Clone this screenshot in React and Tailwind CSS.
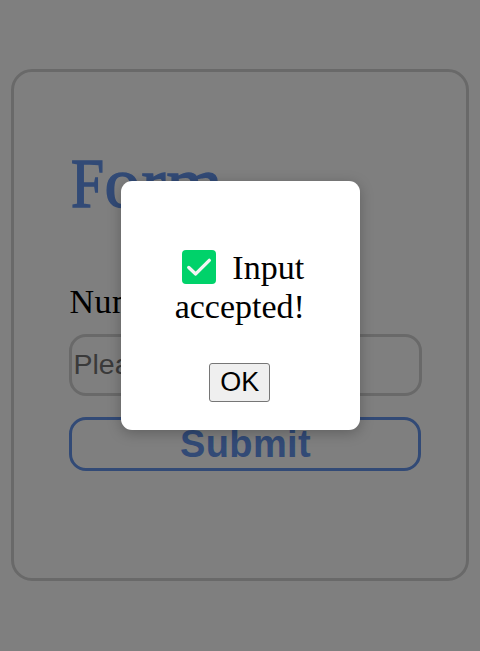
export default function App() {
  return (
    <div className="relative h-[651px] w-[480px] overflow-hidden bg-white">
      <main className="px-[11px] pt-[69px]">
        <form className="flex h-[512px] w-[458px] flex-col rounded-[21px] border-[3px] border-[#d3d3d3] px-[54.5px] pt-[71px]">
          <h1 className="h-[80px] pl-[2px] font-['Liberation_Serif',serif] text-[72px] leading-[80px] text-[#6495ed] [-webkit-text-stroke:1.5px_#6495ed]">
            <span className="inline-block w-[34px] origin-left scale-x-[0.86] text-[69px]">F</span>
            <span className="tracking-[1px]">orm</span>
          </h1>
          <label className="mt-[59px] h-[40px] pl-[1px] font-['Liberation_Serif',serif] text-[34px] leading-[40px] tracking-[0.5px] text-black">
            Number
          </label>
          <input
            className="mt-[12px] h-[62px] w-[353px] shrink-0 rounded-[17px] border-[3px] border-[#d3d3d3] bg-white px-[2px] pb-px font-['Liberation_Sans',sans-serif] text-[28.5px] text-black placeholder:text-[#757575]"
            placeholder="Please enter"
          />
          <button
            type="button"
            className="mt-[20.5px] flex h-[54px] w-[352px] shrink-0 items-center justify-center rounded-[17px] border-[3px] border-[#6495ed] bg-white pl-[2px] pt-px font-['Liberation_Sans',sans-serif] text-[38px] font-bold tracking-[0.4px] text-[#6495ed]"
          >
            Submit
          </button>
        </form>
      </main>
      <div className="absolute inset-0 bg-black/50">
        <div
          role="dialog"
          className="ml-[120.5px] mt-[180.5px] flex h-[249px] w-[239.5px] flex-col items-center rounded-[11px] bg-white pt-[67.5px] shadow-[0_3px_14px_rgba(0,0,0,0.25)]"
        >
          <p className="text-center font-['Liberation_Serif',serif] text-[34px] leading-[39px] text-black">
            <span className="flex items-center justify-center pl-[6px]">
              <svg width="34" height="34" viewBox="0 0 34 34" className="relative -top-px mr-[16px]">
                <rect width="34" height="34" rx="4" fill="#00d26a" />
                <path d="M6.8 17.5l6.9 6.4L27.3 10.4" fill="none" stroke="#f4f4f4" strokeWidth="3.4" strokeLinecap="round" strokeLinejoin="round" />
              </svg>
              Input
            </span>
            <span className="block -translate-x-[0.5px]">accepted!</span>
          </p>
          <button
            type="button"
            className="mr-[2px] mt-[37px] h-[39px] w-[61px] rounded-[3px] border border-[#767676] bg-[#efefef] pl-px font-['Liberation_Sans',sans-serif] text-[27px] leading-[37px] text-black"
          >
            OK
          </button>
        </div>
      </div>
    </div>
  );
}
